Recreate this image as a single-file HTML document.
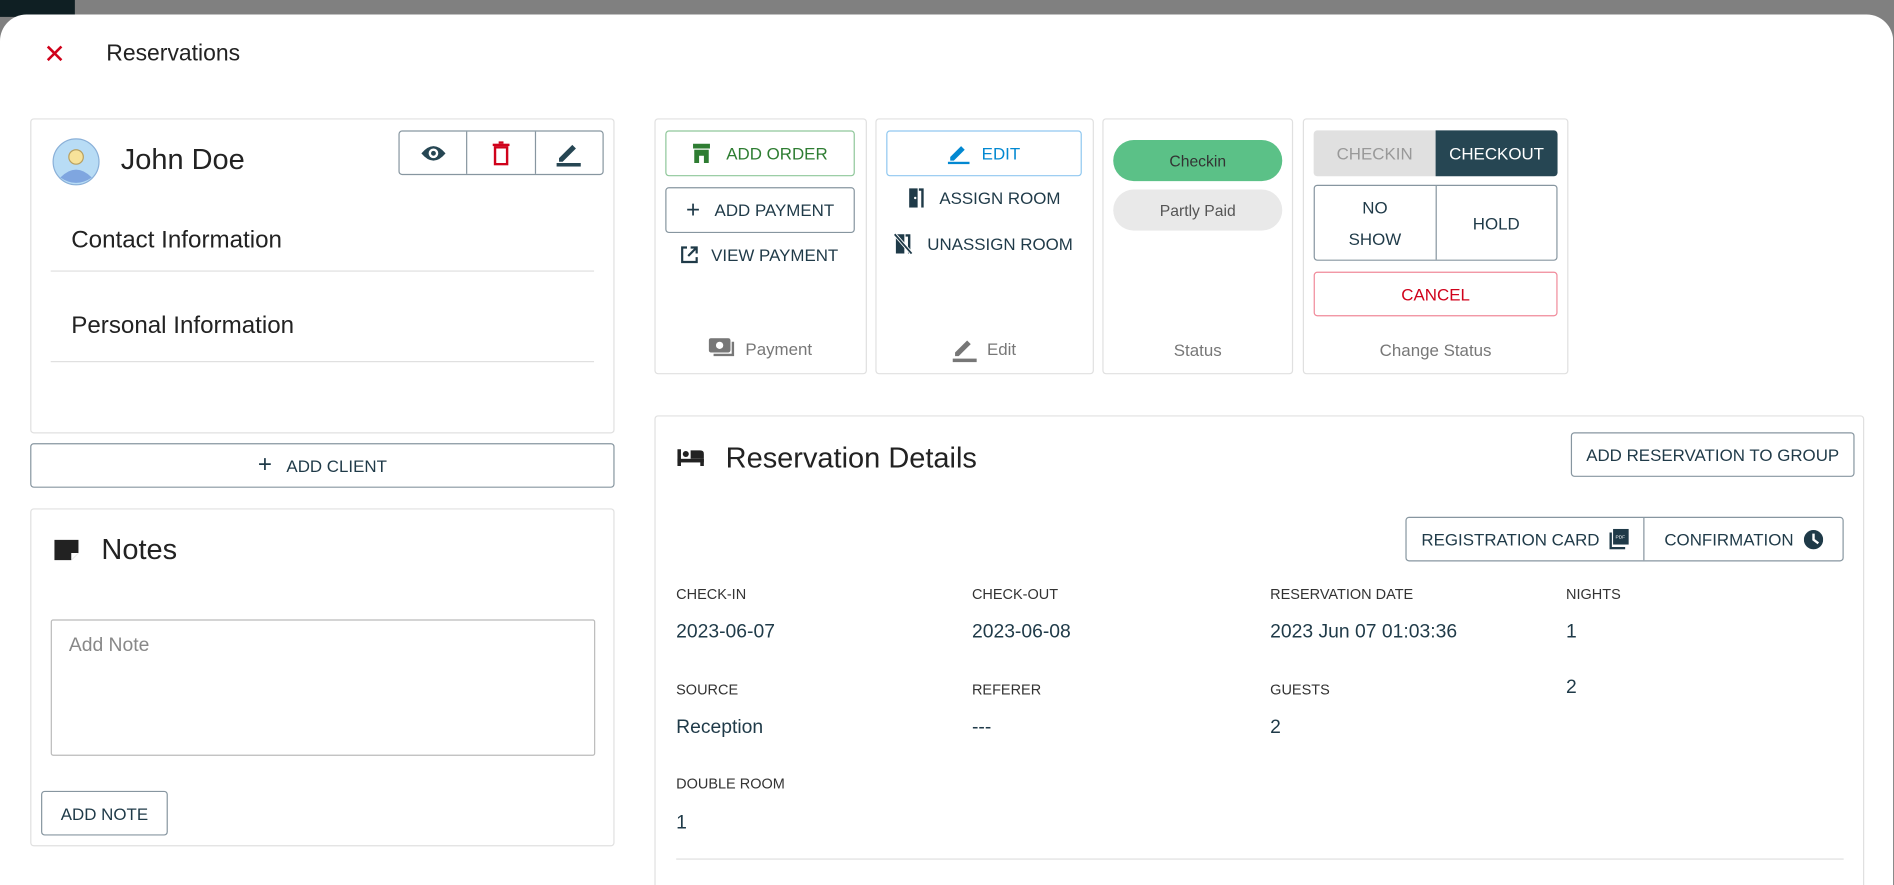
<!DOCTYPE html>
<html><head><meta charset="utf-8"><style>
*{box-sizing:border-box;margin:0;padding:0}
html,body{width:1894px;height:885px;overflow:hidden;background:#808080;font-family:"Liberation Sans",sans-serif;color:#1f3a48}
#w{position:relative;width:1894px;height:885px;overflow:hidden}
#s{width:1568px;height:733px;transform:scale(1.2074);transform-origin:0 0;position:absolute;left:0;top:0;overflow:hidden}
.a{position:absolute}
.modal{left:0;top:12px;width:1568px;height:721px;background:#fff;border-radius:22px 22px 0 0}
.card{position:absolute;border:1px solid #e0e0e0;border-radius:3px;background:#fff}
.btn{position:absolute;border:1px solid #8796a0;border-radius:3px;display:flex;align-items:center;justify-content:center;font-size:14px;color:#1f3a48;background:#fff}
.lbl{position:absolute;font-size:12px;color:#333}
.val{position:absolute;font-size:16px;color:#1f3a48}
.foot{position:absolute;font-size:14px;color:#777;width:100%;text-align:center}
</style></head><body><div id="w"><div id="s">
<div class="a" style="left:0;top:0;width:62px;height:14px;background:#0f1f23"></div>
<div class="a modal"></div>
<div class="a" style="left:36px;top:34px;font-size:22px;color:#d0021b;line-height:22px">✕</div>
<div class="a" style="left:88px;top:34px;font-size:19px;color:#222">Reservations</div>

<div class="card" style="left:25px;top:98px;width:484px;height:261px">
 <svg class="a" style="left:17px;top:15px" width="40" height="40" viewBox="0 0 40 40"><circle cx="20" cy="20" r="19" fill="#b8dcf5" stroke="#8ab0d8"/><circle cx="20" cy="16" r="6" fill="#f7e29a" stroke="#b8a060"/><path d="M7 33 Q20 20 33 33 Q20 42 7 33Z" fill="#7fa6e0"/></svg>
 <div class="a" style="left:74px;top:20px;font-size:24px;color:#222">John Doe</div>
 <div class="a" style="left:304px;top:9px;width:170px;height:37px;border:1px solid #8796a0;border-radius:3px;display:flex">
  <div style="flex:1;border-right:1px solid #8796a0;display:flex;align-items:center;justify-content:center"><svg width="22" height="16" viewBox="0 0 22 16"><path d="M1 8Q11-4 21 8Q11 20 1 8Z" fill="#264653"/><circle cx="11" cy="8" r="4" fill="#fff"/><circle cx="11" cy="8" r="2" fill="#264653"/></svg></div>
  <div style="flex:1;border-right:1px solid #8796a0;display:flex;align-items:center;justify-content:center"><svg width="14" height="20" viewBox="0 0 14 20"><rect x="0" y="2" width="14" height="2" fill="#d0021b"/><rect x="5" y="0" width="4" height="2" fill="#d0021b"/><rect x="2" y="5" width="10" height="14" fill="none" stroke="#d0021b" stroke-width="2"/></svg></div>
  <div style="flex:1;display:flex;align-items:center;justify-content:center"><svg width="22" height="22" viewBox="0 0 22 22"><path d="M3 15L14 4L17 7L6 18H3Z" fill="#264653"/><rect x="1" y="19" width="20" height="3" fill="#264653"/></svg></div>
 </div>
 <div class="a" style="left:33px;top:89px;font-size:20px;color:#222">Contact Information</div>
 <div class="a" style="left:16px;top:125px;width:450px;border-top:1px solid #e0e0e0"></div>
 <div class="a" style="left:33px;top:160px;font-size:20px;color:#222">Personal Information</div>
 <div class="a" style="left:16px;top:200px;width:450px;border-top:1px solid #e0e0e0"></div>
</div>
<div class="btn" style="left:25px;top:367px;width:484px;height:37px"><span style="font-size:20px;margin-right:12px">+</span>ADD CLIENT</div>

<div class="card" style="left:25px;top:421px;width:484px;height:280px">
 <svg class="a" style="left:19px;top:25px" width="20" height="17" viewBox="0 0 20 17"><path d="M0 0H20V11L14 17H0Z" fill="#222"/><path d="M14 17V11H20" fill="#fff"/></svg>
 <div class="a" style="left:58px;top:20px;font-size:24px;color:#222">Notes</div>
 <div class="a" style="left:16px;top:91px;width:451px;height:113px;border:1px solid #bbb;border-radius:2px"></div>
 <div class="a" style="left:31px;top:104px;font-size:16px;color:#888">Add Note</div>
 <div class="btn" style="left:8px;top:233px;width:105px;height:37px">ADD NOTE</div>
</div>

<div class="card" style="left:542px;top:98px;width:176px;height:212px">
 <div class="btn" style="left:8px;top:9px;width:157px;height:38px;border-color:#8fc79a;color:#2e7d32"><svg width="16" height="16" viewBox="0 0 16 16" style="margin-right:12px"><rect x="1" y="0" width="14" height="4" fill="#2e7d32"/><rect x="2" y="5" width="12" height="11" fill="#2e7d32"/><rect x="6" y="10" width="4" height="6" fill="#fff"/></svg>ADD ORDER</div>
 <div class="btn" style="left:8px;top:56px;width:157px;height:38px"><span style="font-size:20px;margin-right:12px">+</span>ADD PAYMENT</div>
 <div class="a" style="left:20px;top:104px;font-size:14px;display:flex;align-items:center"><svg width="16" height="16" viewBox="0 0 16 16" style="margin-right:10px"><path d="M6 2H2V14H14V10M9 2H14V7M14 2L7 9" fill="none" stroke="#1f3a48" stroke-width="1.8"/></svg>VIEW PAYMENT</div>
 <div class="foot" style="top:181px"><svg width="22" height="16" viewBox="0 0 22 16" style="vertical-align:-2px;margin-right:8px"><rect x="0" y="0" width="18" height="12" rx="2" fill="#777"/><circle cx="9" cy="6" r="3" fill="#fff"/><path d="M20 3V14H4" fill="none" stroke="#777" stroke-width="2"/></svg>Payment</div>
</div>

<div class="card" style="left:725px;top:98px;width:181px;height:212px">
 <div class="btn" style="left:8px;top:9px;width:162px;height:38px;border-color:#90c8f0;color:#0288d1"><svg width="18" height="18" viewBox="0 0 18 18" style="margin-right:10px"><path d="M2 12L11 3L14 6L5 15H2Z" fill="#0288d1"/><rect x="0" y="16" width="18" height="2" fill="#0288d1"/></svg>EDIT</div>
 <div class="a" style="left:26px;top:56px;font-size:14px;display:flex;align-items:center"><svg width="14" height="17" viewBox="0 0 14 17" style="margin-right:12px"><path d="M1 1H8V17H1Z" fill="#1f3a48"/><path d="M9 2H12V17" fill="none" stroke="#1f3a48" stroke-width="2"/><circle cx="6" cy="9" r="1" fill="#fff"/></svg>ASSIGN ROOM</div>
 <div class="a" style="left:14px;top:94px;font-size:14px;display:flex;align-items:center"><svg width="16" height="18" viewBox="0 0 16 18" style="margin-right:12px"><path d="M2 1H9V17H2Z" fill="#1f3a48"/><path d="M10 2H13V17" fill="none" stroke="#1f3a48" stroke-width="2"/><path d="M1 1L15 17" stroke="#fff" stroke-width="3"/><path d="M1 1L15 17" stroke="#1f3a48" stroke-width="1.5"/></svg>UNASSIGN ROOM</div>
 <div class="foot" style="top:179px;display:flex;align-items:center;justify-content:center"><svg width="20" height="22" viewBox="0 0 20 22" style="margin-right:8px"><path d="M2 14L12 4L15 7L5 17H2Z" fill="#777"/><rect x="0" y="19" width="20" height="3" fill="#777"/></svg>Edit</div>
</div>

<div class="card" style="left:913px;top:98px;width:158px;height:212px">
 <div class="a" style="left:8px;top:17px;width:140px;height:34px;border-radius:17px;background:#5bc187;font-size:13px;display:flex;align-items:center;justify-content:center;color:#333">Checkin</div>
 <div class="a" style="left:8px;top:58px;width:140px;height:34px;border-radius:17px;background:#e9e9e9;font-size:13px;display:flex;align-items:center;justify-content:center;color:#555">Partly Paid</div>
 <div class="foot" style="top:183px">Status</div>
</div>

<div class="card" style="left:1079px;top:98px;width:220px;height:212px">
 <div class="a" style="left:8px;top:9px;width:101px;height:38px;background:#e0e0e0;color:#999;font-size:14px;display:flex;align-items:center;justify-content:center;border-radius:3px 0 0 3px">CHECKIN</div>
 <div class="a" style="left:109px;top:9px;width:101px;height:38px;background:#264653;color:#fff;font-size:14px;display:flex;align-items:center;justify-content:center;border-radius:0 3px 3px 0">CHECKOUT</div>
 <div class="a" style="left:8px;top:54px;width:202px;height:63px;border:1px solid #8796a0;border-radius:3px;display:flex;font-size:14px">
  <div style="flex:1;border-right:1px solid #8796a0;display:flex;align-items:center;justify-content:center;text-align:center;line-height:26px">NO<br>SHOW</div>
  <div style="flex:1;display:flex;align-items:center;justify-content:center">HOLD</div>
 </div>
 <div class="btn" style="left:8px;top:126px;width:202px;height:37px;border-color:#f08a9a;color:#d0021b">CANCEL</div>
 <div class="foot" style="top:183px">Change Status</div>
</div>

<div class="card" style="left:542px;top:344px;width:1002px;height:400px">
 <svg class="a" style="left:18px;top:27px" width="22" height="14" viewBox="0 0 22 14"><rect x="0" y="0" width="3" height="14" fill="#222"/><rect x="0" y="8" width="22" height="3" fill="#222"/><circle cx="7" cy="4" r="2.5" fill="#222"/><path d="M11 1H19Q22 1 22 4V8H11Z" fill="#222"/><rect x="19" y="8" width="3" height="6" fill="#222"/></svg>
 <div class="a" style="left:58px;top:21px;font-size:24px;color:#222">Reservation Details</div>
 <div class="btn" style="left:758px;top:13px;width:235px;height:37px">ADD RESERVATION TO GROUP</div>
 <div class="a" style="left:621px;top:83px;width:363px;height:37px;border:1px solid #8796a0;border-radius:3px;display:flex;font-size:14px">
  <div style="width:197px;border-right:1px solid #8796a0;display:flex;align-items:center;justify-content:center">REGISTRATION CARD<svg width="16" height="17" viewBox="0 0 16 17" style="margin-left:8px"><rect x="3" y="0" width="13" height="13" fill="#1f3a48"/><path d="M1 3V16H13" fill="none" stroke="#1f3a48" stroke-width="2"/><text x="5" y="8" font-size="4" fill="#fff" font-family="Liberation Sans">PDF</text></svg></div>
  <div style="flex:1;display:flex;align-items:center;justify-content:center">CONFIRMATION<svg width="16" height="16" viewBox="0 0 16 16" style="margin-left:8px"><circle cx="8" cy="8" r="8" fill="#1f3a48"/><path d="M8 3V8L12 11" fill="none" stroke="#fff" stroke-width="2"/></svg></div>
 </div>
 <div class="lbl" style="left:17px;top:140px">CHECK-IN</div><div class="val" style="left:17px;top:170px">2023-06-07</div>
 <div class="lbl" style="left:262px;top:140px">CHECK-OUT</div><div class="val" style="left:262px;top:170px">2023-06-08</div>
 <div class="lbl" style="left:509px;top:140px">RESERVATION DATE</div><div class="val" style="left:509px;top:170px">2023 Jun 07 01:03:36</div>
 <div class="lbl" style="left:754px;top:140px">NIGHTS</div><div class="val" style="left:754px;top:170px">1</div>
 <div class="lbl" style="left:17px;top:219px">SOURCE</div><div class="val" style="left:17px;top:249px">Reception</div>
 <div class="lbl" style="left:262px;top:219px">REFERER</div><div class="val" style="left:262px;top:249px">---</div>
 <div class="lbl" style="left:509px;top:219px">GUESTS</div><div class="val" style="left:509px;top:249px">2</div>
 <div class="val" style="left:754px;top:216px">2</div>
 <div class="lbl" style="left:17px;top:297px">DOUBLE ROOM</div><div class="val" style="left:17px;top:328px">1</div>
 <div class="a" style="left:17px;top:366px;width:967px;border-top:1px solid #e0e0e0"></div>
</div>
</div></div></body></html>
